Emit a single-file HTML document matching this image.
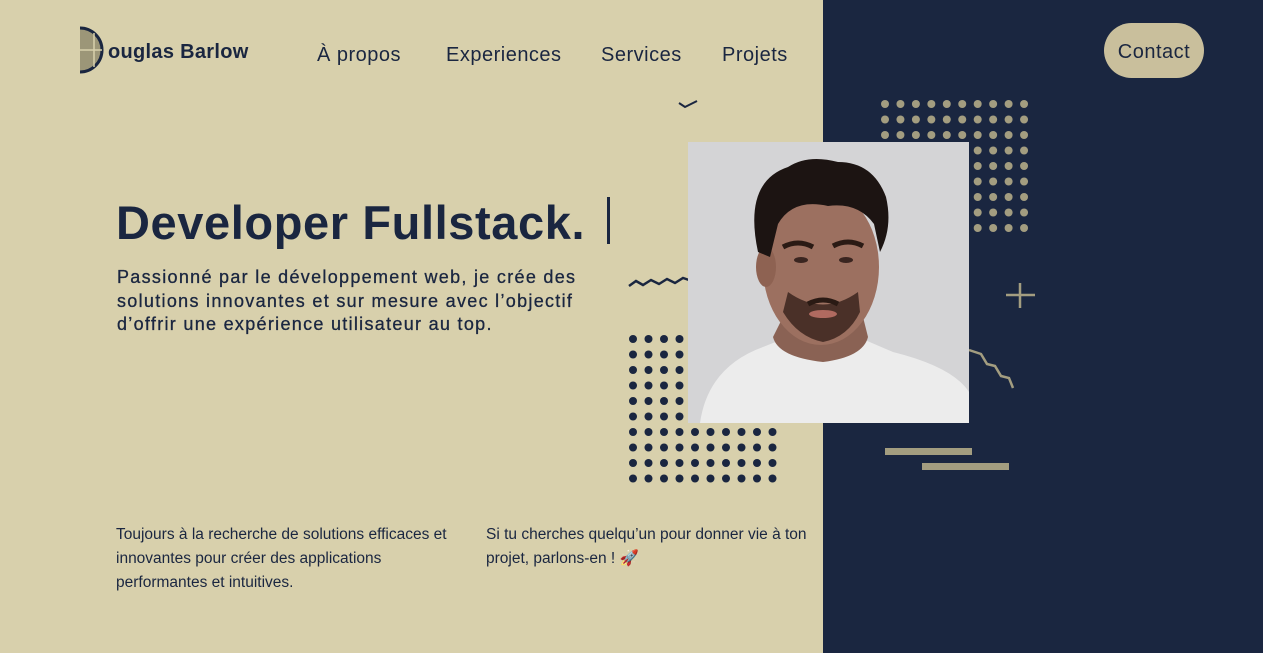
<!DOCTYPE html>
<html><head><meta charset="utf-8"><style>
*{margin:0;padding:0;box-sizing:border-box}
body{width:1263px;height:653px;overflow:hidden;background:#d8d0ac;font-family:"Liberation Sans",sans-serif;color:#1a2640;position:relative}
.navy{position:absolute;left:823px;top:0;width:440px;height:653px;background:#1a2640}
.abs{position:absolute}
.nav a{position:absolute;top:44px;font-size:20px;letter-spacing:0.5px;color:#1a2640;text-decoration:none}
h1{position:absolute;left:116px;top:195px;font-size:47px;font-weight:bold;letter-spacing:0.6px;white-space:nowrap}
.p{position:absolute;left:117px;top:266px;font-size:18px;line-height:23.5px;letter-spacing:1.3px;width:480px;-webkit-text-stroke:0.3px #1a2640}
.small{position:absolute;top:523px;font-size:15.5px;line-height:24px;letter-spacing:0px}
</style></head><body>
<div class="small" style="left:116px;width:352px">Toujours à la recherche de solutions efficaces et innovantes pour créer des applications performantes et intuitives.</div>
<div class="small" style="left:486px;width:352px">Si tu cherches quelqu’un pour donner vie à ton projet, parlons-en ! 🚀</div>
<div class="navy"></div>
<svg class="abs" style="left:76px;top:25px" width="30" height="50" viewBox="0 0 30 50">
<path d="M4 3 A22 22 0 0 1 4 47 L4 3Z" fill="#9c9678"/>
<path d="M4 3 A22 22 0 0 1 4 47" fill="none" stroke="#1a2640" stroke-width="3"/>
<line x1="4" y1="25" x2="26" y2="25" stroke="#d8d0ac" stroke-width="1.5"/>
<line x1="18" y1="8" x2="18" y2="42" stroke="#d8d0ac" stroke-width="1.5"/>
</svg>
<div class="abs" style="left:108px;top:41px;font-size:20px;font-weight:bold;letter-spacing:0.3px">ouglas Barlow</div>
<div class="nav"><a style="left:317px">À propos</a><a style="left:446px">Experiences</a><a style="left:601px">Services</a><a style="left:722px">Projets</a></div>
<div class="abs" style="left:1104px;top:23px;width:100px;height:55px;border-radius:28px;background:#c9bf9c;font-size:20px;text-align:center;line-height:58px;letter-spacing:0.5px">Contact</div>
<h1>Developer Fullstack.</h1>
<div class="abs" style="left:607px;top:197px;width:3px;height:47px;background:#1a2640"></div>
<div class="p">Passionné par le développement web, je crée des solutions innovantes et sur mesure avec l’objectif d’offrir une expérience utilisateur au top.</div>
<svg class="abs" style="left:0;top:0" width="1263" height="653">
<path d="M629 286 l7-5 7 4 8-5 8 4 8-5 8 4 8-5 6 2" fill="none" stroke="#1a2640" stroke-width="2.5"/>
<path d="M679 103 l6 4 12-6" fill="none" stroke="#1a2640" stroke-width="2"/>
<path d="M969 350 l12 4 6 10 8 2 6 10 8 2 4 10" fill="none" stroke="#a39d80" stroke-width="2.5"/>
<path d="M1020 283 v25 M1006 295 h29" stroke="#a39d80" stroke-width="2.5"/>
<rect x="885" y="448" width="87" height="7" fill="#a39d80"/>
<rect x="922" y="463" width="87" height="7" fill="#a39d80"/>
</svg>
<svg class="abs" style="left:0;top:0" width="1263" height="653" id="dots"></svg>
<svg class="abs" style="left:688px;top:142px" width="281" height="281" viewBox="0 0 281 281">
<rect width="281" height="281" fill="#d4d4d6"/>
<path d="M12 281 Q20 225 75 205 L100 195 L170 195 L205 210 Q265 225 281 250 L281 281Z" fill="#ececec"/>
<path d="M85 195 Q90 215 135 220 Q175 215 180 195 L175 175 L95 175Z" fill="#8a6254"/>
<ellipse cx="133" cy="125" rx="58" ry="78" fill="#9c7060"/>
<ellipse cx="78" cy="125" rx="10" ry="20" fill="#8e6252"/>
<path d="M135 200 Q110 195 95 170 L100 150 Q135 175 170 150 L172 170 Q160 195 135 200Z" fill="#4a3028"/>
<path d="M70 110 Q55 40 100 25 Q120 12 150 20 Q185 20 198 55 Q205 85 192 110 L186 82 Q170 60 140 64 Q105 56 90 82 L82 115Z" fill="#1c1412"/>
<path d="M95 105 q15-8 30 0 M145 104 q15-8 30 0" stroke="#2a1a14" stroke-width="5" fill="none"/>
<path d="M120 162 q15-8 30 0" stroke="#2a1a14" stroke-width="5" fill="none"/>
<ellipse cx="113" cy="118" rx="7" ry="3" fill="#3a2520"/>
<ellipse cx="158" cy="118" rx="7" ry="3" fill="#3a2520"/>
<ellipse cx="135" cy="172" rx="14" ry="4" fill="#b06a60"/>
</svg>
<script>
var s='';
for(var r=0;r<10;r++)for(var c=0;c<10;c++){if(r<6&&c>3)continue;s+='<circle cx="'+(633+c*15.5)+'" cy="'+(339+r*15.5)+'" r="4" fill="#1a2640"/>';}
for(var r=0;r<9;r++)for(var c=0;c<10;c++){if(r>2&&c<6)continue;var y=104+r*15.5;s+='<circle cx="'+(885+c*15.45)+'" cy="'+y+'" r="4" fill="#a39d80"/>';}
document.getElementById('dots').innerHTML=s;
</script>
</body></html>
